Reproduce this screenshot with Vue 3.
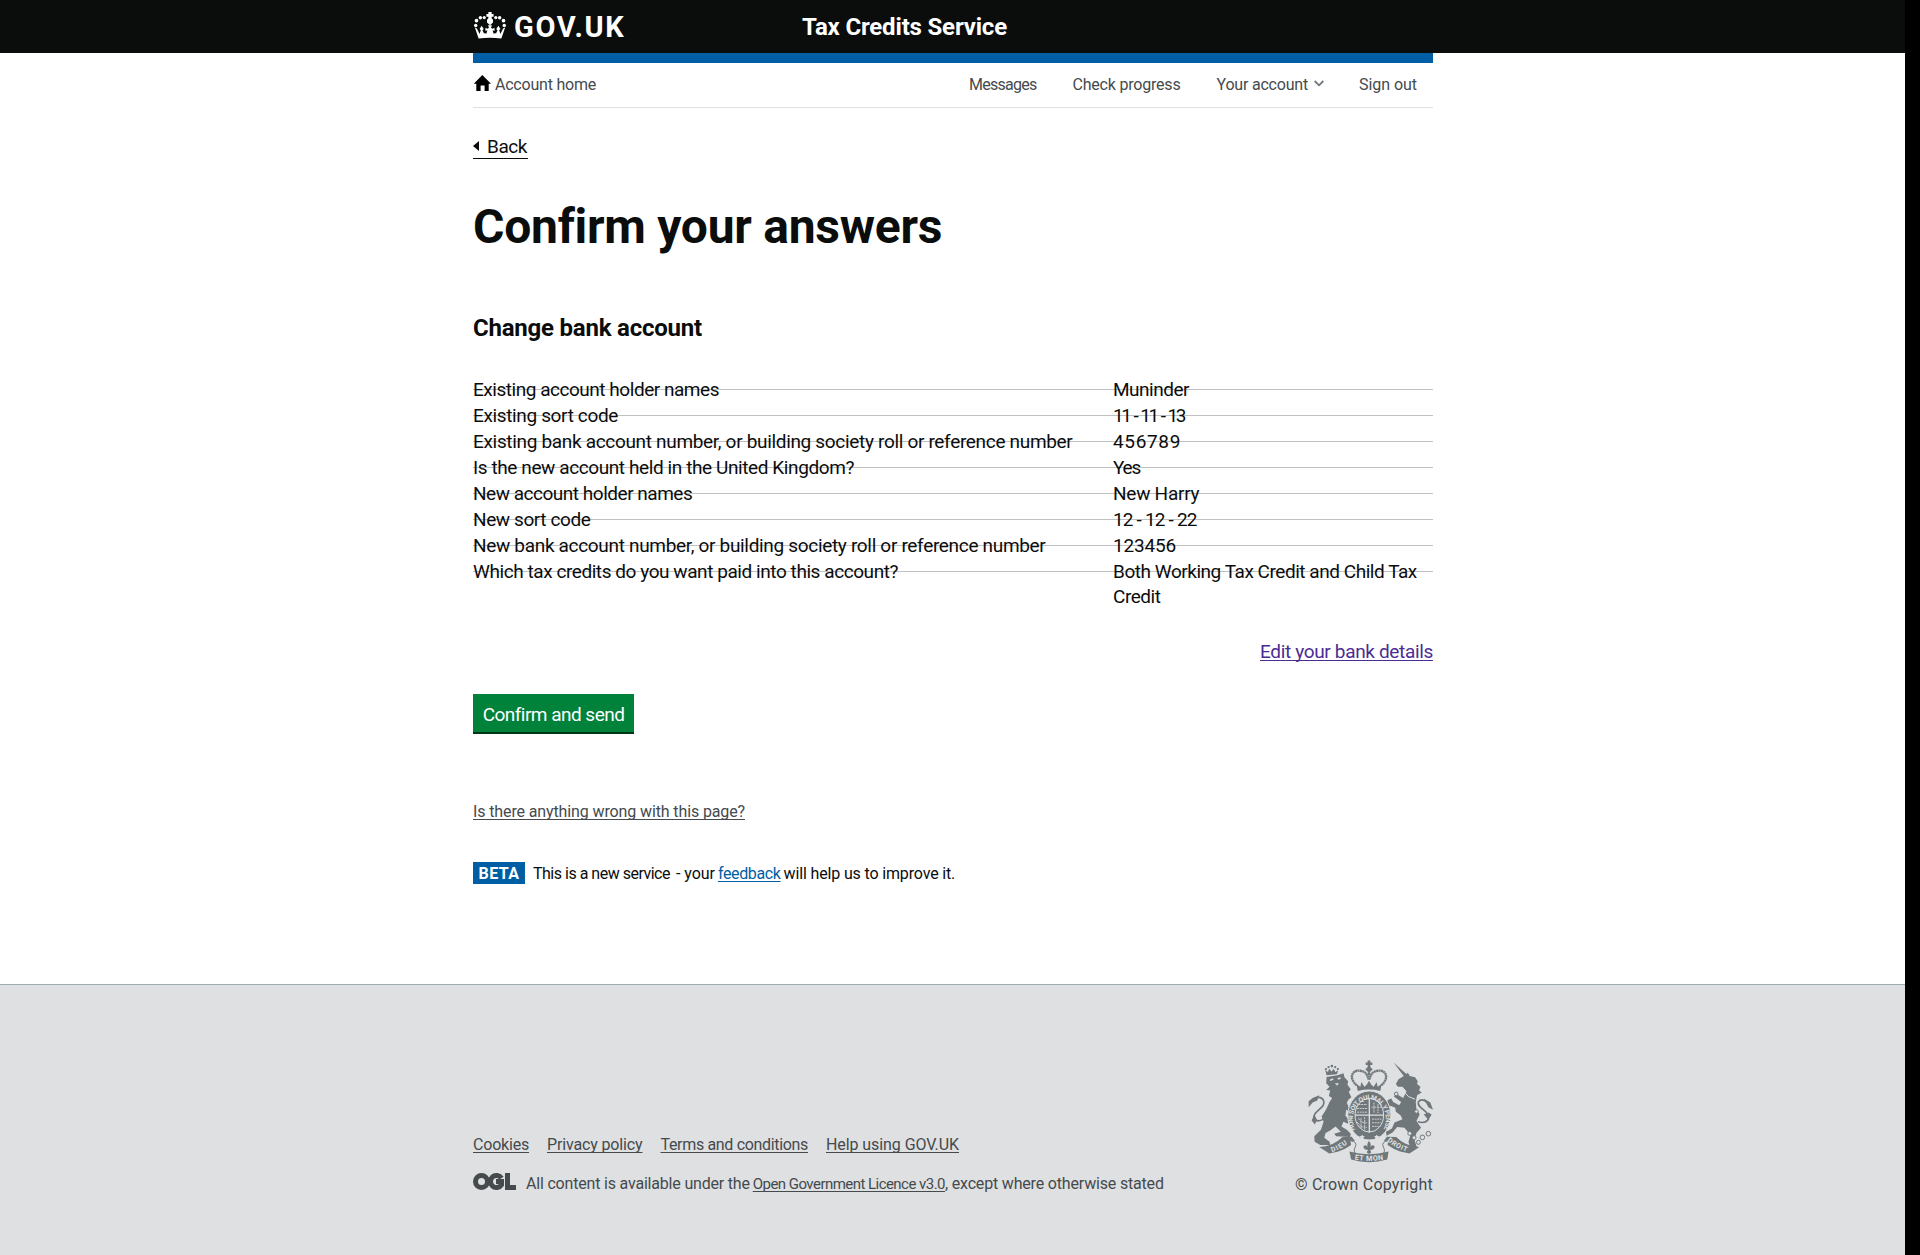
<script setup>
const nav = [
  { label: 'Messages', ls: -0.738 },
  { label: 'Check progress', ls: -0.2 },
  { label: 'Your account', ls: -0.2, menu: true },
  { label: 'Sign out', ls: -0.045 },
]

// question, answer, question tracking, answer tracking, answer word spacing
const answers = [
  ['Existing account holder names', 'Muninder', -0.468, -0.488, 0],
  ['Existing sort code', '11 - 11 - 13', -0.356, -2.4, 1.6],
  ['Existing bank account number, or building society roll or reference number', '456789', -0.322, 0.654, 0],
  ['Is the new account held in the United Kingdom?', 'Yes', -0.405, -1.2, 0],
  ['New account holder names', 'New Harry', -0.48, -0.25, 0],
  ['New sort code', '12 - 12 - 22', -0.4, -1, 0.5],
  ['New bank account number, or building society roll or reference number', '123456', -0.32, -0.18, 0],
  ['Which tax credits do you want paid into this account?', 'Both Working Tax Credit and Child Tax Credit', -0.435, -0.46, 0],
]

const links = [
  ['Cookies', -0.2],
  ['Privacy policy', -0.143],
  ['Terms and conditions', -0.33],
  ['Help using GOV.UK', -0.076],
]

const track = (ls, ws = 0) => ({ letterSpacing: ls + 'px', wordSpacing: ws + 'px' })
</script>

<template>
  <div class="page">
    <header class="top">
      <div class="wrap top-inner">
        <a class="brand">
          <svg class="crown" viewBox="0 0 34 28" fill="#fff">
            <path d="M15.3 0h3.400v2h2v2.800h-2v1.800l1.400 1.400v3L17 13.800 13.900 11V8l1.400-1.400V4.800h-2V2h2z" />
            <circle cx="11" cy="5.800" r="1.700" /><circle cx="7" cy="6" r="1.800" /><circle cx="3" cy="9" r="1.900" /><circle cx="2.200" cy="14" r="1.800" />
            <circle cx="23" cy="5.800" r="1.700" /><circle cx="27" cy="6" r="1.800" /><circle cx="31" cy="9" r="1.900" /><circle cx="31.800" cy="14" r="1.800" />
            <path d="M1.300 16.200 3.400 17.200l2.800 5.600 1.300-4-1.300-1.300 2.100-3.300 2.200 3.300-1.300 1.600 1.500 3 2.700.2.900-3.300-2 .7v-3.400l2 1 1.700-1-1.100-2.500h4.200l-1.100 2.500 1.700 1 2-1v3.400l-2-.7.900 3.300 2.700-.2 1.500-3-1.300-1.600 2.200-3.300 2.100 3.300-1.300 1.300 1.300 4 2.800-5.600 2.100-1-3.900 11.400Q17 25.600 5.200 27.600z" />
          </svg>
          <span class="govuk">GOV.UK</span>
        </a>
        <span class="service">Tax Credits Service</span>
      </div>
    </header>

    <main class="wrap main">
      <div class="bar"></div>
      <nav class="nav">
        <a class="home">
          <svg width="18" height="17" viewBox="0 0 18 17"><path d="M9.300 0 18 8.800h-2.300V16h-4.100V10.500H7.600V16H3.300V8.800H.8z" fill="#000" /></svg>
          <span>Account home</span>
        </a>
        <a v-for="n in nav" :key="n.label" class="nav-link">
          <span :style="track(n.ls)">{{ n.label }}</span>
          <svg v-if="n.menu" width="10" height="7" viewBox="0 0 10 7"><path d="M.7 1 5 5.300 9.300 1" /></svg>
        </a>
      </nav>

      <a class="back"><i class="arrow"></i><span>Back</span></a>
      <h1>Confirm your answers</h1>
      <h2>Change bank account</h2>

      <dl class="answers">
        <div v-for="a in answers" :key="a[0]" class="row">
          <dt :style="track(a[2])">{{ a[0] }}</dt>
          <dd :style="track(a[3], a[4])">{{ a[1] }}</dd>
        </div>
      </dl>

      <div class="edit"><a>Edit your bank details</a></div>
      <button class="confirm">Confirm and send</button>
      <div class="report"><a>Is there anything wrong with this page?</a></div>
      <div class="phase">
        <strong class="beta">BETA</strong>
        <span class="phase-a">This is a new service</span>
        <span class="phase-b">- your</span>
        <a class="phase-l">feedback</a>
        <span class="phase-c">will help us to improve it.</span>
      </div>
    </main>

    <footer class="footer">
      <div class="wrap footer-inner">
        <div class="meta">
          <div class="links"><a v-for="l in links" :key="l[0]" :style="track(l[1])">{{ l[0] }}</a></div>
          <div class="licence">
            <svg class="ogl" viewBox="0 0 43 17" fill="none" stroke="#454a4d" stroke-width="5">
              <circle cx="8.500" cy="8.500" r="6" /><path d="M28.500 5.200A6 6 0 1 0 28.500 11.800V8.500H23M34.500 0V14.500H43" />
            </svg>
            <span class="lic-a">All content is available under the</span>
            <a class="ogl-link">Open Government Licence v3.0</a>
            <span class="lic-c">, except where otherwise stated</span>
          </div>
        </div>
        <div class="crown-copy">
          <svg class="crest" viewBox="83 58 377 310" fill="#6f777b">
            <!-- lion -->
            <g>
              <path d="M139 104 135 88l8 6 4-10 7 8 7-8 4 10 9-5-4 12z" />
              <circle cx="137" cy="85" r="3.500" /><circle cx="145" cy="79" r="3.500" /><circle cx="155" cy="76" r="4" /><circle cx="165" cy="79" r="3.500" /><circle cx="173" cy="85" r="3.500" />
              <path d="M139 109 172 104 190 98 193 110 204 122 202 132 212 146 206 154 214 170 206 176 200 186 206 202 216 206 212 216 198 208 196 226 206 238 204 250 190 244 184 258 200 268 212 280 210 290 168 288 162 280 182 274 166 258 150 270 136 278 132 292 148 304 150 314 120 314 103 304 102 288 122 268 130 244 124 228 138 206 148 184 156 172 146 166 150 150 138 148 148 138 138 128z" />
              <path d="M148 117l10-4 2 4-10 4zM172 112l9-2 1 4-8 3zM164 128h12l-5 7z" fill="#dee0e2" />
              <path d="M130 236C108 248 95 236 104 220 116 204 136 198 130 180 123 166 106 168 92 184" fill="none" stroke="#6f777b" stroke-width="5" />
              <path d="M85 200 85 182l12-10 20-8-6 16-14 6zM94 240l8-18 8 16-6 14z" />
            </g>
            <!-- unicorn -->
            <g>
              <path d="m341 65 33 44 9-6z" />
              <path d="M348 130 356 116 372 106 384 96 390 106 406 110 414 122 412 130 422 138 418 150 426 156 412 164 408 184 410 206 420 222 410 242 424 262 410 278 404 298 412 322 392 324 386 304 392 284 374 262 352 260 338 276 320 286 318 274 336 264 344 246 368 236 362 224 348 214 346 202 332 196 326 206 318 196 324 178 334 174 340 184 358 194 364 184 342 168 350 160 370 172 380 152 368 138 354 138z" />
              <path d="M352 154 372 152l14 16 20 8" fill="none" stroke="#dee0e2" stroke-width="3" />
              <path d="M414 244C444 252 454 234 440 216 426 202 412 196 416 184 424 172 442 180 452 196" fill="none" stroke="#6f777b" stroke-width="5" />
              <path d="M432 174 452 186l8 22-14-8zM432 222l14-6 10 6-10 16z" />
              <g fill="#dee0e2" stroke="#6f777b" stroke-width="3">
                <circle cx="349" cy="160" r="5.500" /><circle cx="410" cy="213" r="5.500" /><circle cx="390" cy="279" r="6" /><circle cx="403" cy="292" r="6" /><circle cx="428" cy="291" r="7" /><circle cx="446" cy="280" r="7" /><circle cx="416" cy="306" r="6" />
              </g>
            </g>
            <!-- shield and garter -->
            <ellipse cx="268" cy="225" rx="65" ry="74" stroke="#dee0e2" stroke-width="3" />
            <ellipse cx="268" cy="224" rx="43" ry="51" fill="none" stroke="#dee0e2" stroke-width="3" />
            <path id="garter" d="M226 268A50 59 0 1 1 310 268" fill="none" />
            <text class="motto" font-size="20"><textPath href="#garter" textLength="236">HONI SOIT QUI MAL Y PENSE</textPath></text>
            <g fill="none" stroke="#dee0e2">
              <path d="M268 174v102M225 224h86" stroke-width="4" />
              <path d="M235 192h26M231 204h30M231 215h30M282 186v32M294 190v28M275 200h30M235 233q9 16 26 14M232 245q12 18 29 16M243 233v32M254 230v40M276 236h28M276 247h26M276 258h20" stroke-width="2.500" stroke-dasharray="6 2" />
            </g>
            <path d="m246 282 3 5h6l-5 4 2 6-6-3-5 3 1-6-4-4h6zM290 282l3 5h6l-5 4 2 6-6-3-5 3 1-6-4-4h6z" fill="#dee0e2" />
            <!-- royal crown -->
            <path d="M233 151 229 130l12 8 3-14 9 14 7-6 7-12 7 12 7 6 9-14 3 14 12-8-4 21Q267 143 233 151z" />
            <path d="M230 134C206 114 214 88 237 90q24 0 28 26M304 134C328 114 320 88 297 90q-24 0-28 26M267 90v28" fill="none" stroke="#6f777b" stroke-width="7" stroke-dasharray="6 1.200" />
            <path d="M263 59h8v6h6v8h-6v6l7 7-11 10-11-10 7-7v-6h-6v-8h6z" />
            <!-- motto ribbon -->
            <path d="M117 320q40 0 70-30l28-1 10 14-14-2 2 13q-20 14-38 20l-28 6zM419 320q-40 0-70-30l-28-1-10 14 14-2-2 13q20 14 38 20l28 6z" />
            <path d="M208 334Q267 350 326 334L322 358Q267 374 213 358z" />
            <path d="M211 301q22 4 15 18t0 20M325 301q-22 4-15 18t0 20" fill="none" stroke="#6f777b" stroke-width="3" />
            <path d="M267 302q8 10 4 18 5-8 12-3 3 8-7 11l-6 0 4 9-7 4-7-4 4-9-6 0q-10-3-7-11 7-5 12 3-4-8 4-18z" />
            <path id="dieu" d="M155 336Q184 326 208 306" fill="none" /><path id="droit" d="M321 302Q350 326 388 336" fill="none" /><path id="etmon" d="M223 358Q267 366 313 358" fill="none" />
            <text class="motto" font-size="21"><textPath href="#dieu" textLength="54">DIEU</textPath></text>
            <text class="motto" font-size="21"><textPath href="#droit" textLength="68">DROIT</textPath></text>
            <text class="motto" font-size="22"><textPath href="#etmon" textLength="88">ET MON</textPath></text>
          </svg>
          <span>© Crown Copyright</span>
        </div>
      </div>
    </footer>
  </div>
</template>

<style>
body { background: #000; }
</style>

<style scoped>
* { box-sizing: border-box; }
.page { width: 1905px; min-height: 1255px; background: #fff; color: #0b0c0c; font: 19px/25px Roboto, sans-serif; display: flex; flex-direction: column; }
.wrap { width: 960px; margin: 0 0 0 473px; }
.top { height: 53px; background: #0b0c0c; color: #fff; font-weight: 700; }
.top-inner { display: flex; }
.brand { display: flex; width: 329px; }
.crown { width: 34px; height: 27px; margin: 12px 7px 0 0; }
.govuk { font-size: 29px; line-height: 30px; margin-top: 12px; letter-spacing: 1.700px; }
.service { font-size: 24px; line-height: 30px; margin-top: 12px; white-space: nowrap; letter-spacing: -.177px; }
.main { height: 931px; }
.bar { height: 10px; background: #005ea5; }
.nav { display: flex; height: 45px; padding: 12px 16px 0 0; border-bottom: 1px solid #dee0e2; font-size: 16px; line-height: 20px; color: #454a4d; }
.home { display: flex; margin-right: auto; letter-spacing: -.219px; }
.home svg { margin-right: 4px; }
.nav-link { margin-left: 36px; display: flex; }
.nav-link:last-child { margin-left: 35px; }
.nav-link svg { margin: 5px 0 0 6px; fill: none; stroke: #6f777b; stroke-width: 1.800; }
.back { display: flex; align-items: flex-start; width: 55px; height: 25px; margin-top: 26px; border-bottom: 1px solid #0b0c0c; letter-spacing: -.438px; }
.arrow { border: 5px solid transparent; border-left: 0; border-right: 6px solid #0b0c0c; margin: 7px 8px 0 0; }
h1 { font-size: 48px; line-height: 50px; margin: 43px 0 0; letter-spacing: -.26px; }
h2 { font-size: 24px; line-height: 30px; margin: 61px 0 34px; letter-spacing: -.215px; }
.answers { margin: 0; }
.row { display: flex; min-height: 26px; background: linear-gradient(#bfc1c3, #bfc1c3) 0 12px / 100% 1px no-repeat; }
dt { width: 640px; white-space: nowrap; }
dd { margin: 0; width: 320px; }
.edit { margin-top: 30px; text-align: right; color: #4c2c92; letter-spacing: -.338px; }
.edit a, .report a, .phase a, .footer a { text-decoration: underline 1px; text-underline-offset: 2px; text-decoration-skip-ink: none; }
.confirm { display: block; margin-top: 30px; height: 38px; width: 161px; padding: 2px 0 0; border: 0; background: #00823b; color: #fff; box-shadow: 0 2px 0 #003618; font: inherit; letter-spacing: -.524px; white-space: nowrap; }
.report { margin-top: 70px; font-size: 16px; line-height: 20px; color: #454a4d; letter-spacing: -.12px; }
.phase { display: flex; margin-top: 40px; font-size: 16px; line-height: 22px; height: 22px; }
.phase > :not(.beta) { position: relative; top: 1px; }
.beta { width: 52px; background: #005ea5; color: #fff; text-align: center; margin-right: 8px; letter-spacing: .449px; line-height: 23px; }
.phase-a { margin-right: 6px; letter-spacing: -.495px; }
.phase-b { margin-right: 3px; letter-spacing: -.05px; }
.phase-l { color: #005ea5; margin-right: 3px; letter-spacing: -.36px; }
.phase-c { letter-spacing: -.15px; }
.footer { flex: 1; border-top: 1px solid #a1acb2; background: #dee0e2; color: #454a4d; font-size: 16px; line-height: 20px; }
.footer-inner { display: flex; justify-content: space-between; padding-top: 75px; }
.meta { padding-top: 75px; }
.links { display: flex; gap: 18px; }
.licence { display: flex; margin-top: 19px; white-space: nowrap; }
.ogl { width: 43px; height: 17px; margin: -1px 10px 0 0; }
.lic-a { margin-right: 3px; letter-spacing: -.19px; }
.ogl-link { font-size: 15px; letter-spacing: -.54px; }
.lic-c { letter-spacing: -.175px; }
.crown-copy { display: flex; flex-direction: column; align-items: flex-end; letter-spacing: .204px; }
.crest { width: 125px; height: 103px; margin-bottom: 12px; letter-spacing: 0; }
.motto { fill: #dee0e2; font-weight: 700; }
</style>
